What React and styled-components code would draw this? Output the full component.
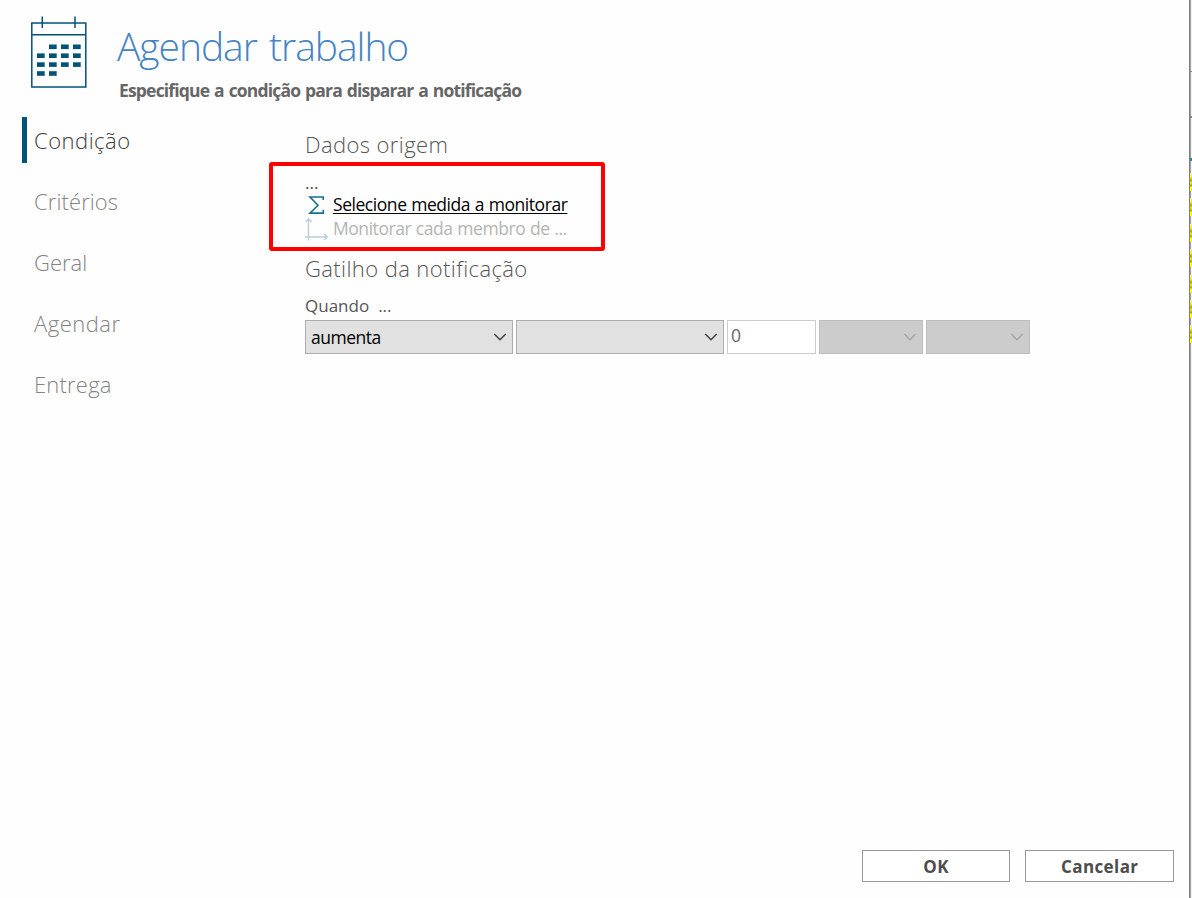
import styled, { createGlobalStyle } from "styled-components";

const GlobalStyle = createGlobalStyle`
  * {
    box-sizing: border-box;
  }

  body {
    margin: 0;
    background: #fefefe;
    font-family: "Open Sans", "Noto Sans", sans-serif;
  }
`;

const Screen = styled.div`
  display: flex;
  width: 100%;
  height: 898px;
  overflow: hidden;
`;

const Dialog = styled.main`
  flex: 1;
  display: flex;
  flex-direction: column;
  border-right: 1px solid #808080;
`;

/* strip of the window behind the dialog */
const Behind = styled.div`
  flex: none;
  width: 2px;
  background: #f4f4f4;
  border-left: 1px solid #a0a0a0;
`;

const BehindMark = styled.div`
  width: 2px;
  height: ${(props) => props.$height};
  margin-left: -1px;
  margin-top: ${(props) => props.$gap};
  background: ${(props) => props.$color};
`;

const Header = styled.header`
  display: flex;
  height: 117px;
  padding: 15px 0 0 30px;
`;

const Heading = styled.div`
  padding: 6px 0 0 30px;
`;

const Title = styled.h1`
  margin: 0;
  font-size: 39px;
  font-weight: 300;
  line-height: 50px;
  letter-spacing: -1.05px;
  word-spacing: 3.2px;
  color: #4684c4;
`;

const Subtitle = styled.p`
  margin: 7px 0 0 2px;
  font-size: 17.5px;
  font-weight: 700;
  line-height: 24px;
  letter-spacing: -0.82px;
  word-spacing: 1.1px;
  color: #666;
`;

const Body = styled.div`
  flex: 1;
  display: flex;
`;

const Nav = styled.nav`
  display: flex;
  flex-direction: column;
  gap: 15px;
  width: 269px;
  padding-left: 22px;
`;

const NavItem = styled.a`
  height: 46px;
  padding-left: 7px;
  border-left: 5px solid ${(props) => (props.$active ? "#005377" : "transparent")};
  font-size: 22px;
  font-weight: 300;
  line-height: 46px;
  letter-spacing: ${(props) => props.$spacing};
  color: ${(props) => (props.$active ? "#3c3c3c" : "#848484")};
`;

const Content = styled.section`
  display: flex;
  flex-direction: column;
  align-items: flex-start;
`;

const SectionTitle = styled.h2`
  margin: 0 0 0 36px;
  padding-top: ${(props) => props.$top};
  font-size: 22px;
  font-weight: 300;
  line-height: 30px;
  letter-spacing: 0.4px;
  color: #555;
`;

const Highlight = styled.div`
  width: 336px;
  height: 89px;
  margin-top: 3px;
  padding: 8px 0 0 32px;
  border: 4px solid #fe0000;
  border-radius: 3px;
`;

const Dots = styled.div`
  height: 19px;
  font-size: 17px;
  line-height: 17px;
  color: #444;
`;

const SourceRow = styled.div`
  display: flex;
  height: 24px;
  font-size: 17.5px;
  line-height: 23px;
  letter-spacing: -0.45px;
  word-spacing: 0.6px;
  color: ${(props) => (props.$disabled ? "#b4b4b4" : "#000")};

  svg {
    flex: none;
    margin-right: 5px;
  }
`;

const SourceLink = styled.span`
  text-decoration: ${(props) => (props.$underline ? "underline" : "none")};
  text-decoration-thickness: 1.4px;
  text-underline-offset: 2px;
  text-decoration-skip-ink: none;
  white-space: nowrap;
`;

const When = styled.div`
  display: flex;
  gap: 9px;
  margin: 11px 0 0 36px;
  font-size: 17px;
  line-height: 24px;
  color: #555;
`;

const Fields = styled.div`
  display: flex;
  gap: 3.4px;
  margin: 2px 0 0 36px;
`;

const Select = styled.div`
  display: flex;
  align-items: center;
  justify-content: space-between;
  width: ${(props) => props.$width};
  height: 34px;
  padding: 0 5px;
  border: 1.4px solid ${(props) => (props.$disabled ? "#bdbdbd" : "#adadad")};
  background: ${(props) => (props.$disabled ? "#cccccc" : "#e1e1e1")};
  color: ${(props) => (props.$disabled ? "#a6a6a6" : "#000")};
  font-size: 17.5px;
  line-height: 30px;
  letter-spacing: -0.5px;

  svg {
    color: ${(props) => (props.$disabled ? "#a8a8a8" : "#444")};
  }
`;

const NumberField = styled.div`
  width: 88.6px;
  height: 34px;
  padding-left: 3px;
  border: 1.4px solid #ccc;
  background: #fff;
  font-size: 17.5px;
  line-height: 29px;
  color: #666;
`;

const Footer = styled.footer`
  display: flex;
  justify-content: flex-end;
  gap: 15px;
  padding: 0 15px 16px 0;
`;

const Button = styled.button`
  width: 148.6px;
  height: 32px;
  padding: 0;
  border: 1.4px solid #999;
  background: #fff;
  font-family: inherit;
  font-size: 17px;
  font-weight: 700;
  letter-spacing: 0.4px;
  color: #4d4d4d;
`;

const DAYS = [
  [1, 0], [2, 0], [3, 0],
  [0, 1], [1, 1], [2, 1], [3, 1],
  [0, 2], [1, 2], [2, 2], [3, 2],
  [0, 3], [1, 3],
];

function CalendarIcon() {
  return (
    <svg width="57" height="75" viewBox="30 15 57 75" fill="none" stroke="#005377" strokeWidth="1.5">
      <rect x="31.8" y="23" width="54" height="64" />
      <path d="M31.8 34.7H85.8M42.3 16.5V28M75 16.5V28" />
      {DAYS.map(([col, row]) => (
        <rect key={`${col}-${row}`} x={37 + col * 12} y={44.5 + row * 8.9} width="7.7" height="4.6" fill="#005377" stroke="none" />
      ))}
    </svg>
  );
}

function SigmaIcon() {
  return (
    <svg width="23" height="24" viewBox="305 193 23 24" fill="none" stroke="#16718f" strokeWidth="1.6">
      <path d="M323.2 200V197H310L318 205.2L310 213.1H323.3V209.8" />
    </svg>
  );
}

function AxisIcon() {
  return (
    <svg width="23" height="24" viewBox="305 217 23 24" fill="none" stroke="#b5d0dc" strokeWidth="1.4">
      <path d="M308.5 240.5V219M305.4 222L308.5 218.7L311.6 222M305 237H327M324.2 234L327.3 237L324.2 240" />
    </svg>
  );
}

function Chevron() {
  return (
    <svg width="14" height="10" viewBox="0 0 14 10" fill="none" stroke="currentColor" strokeWidth="1.6">
      <path d="M1.3 2L7 7.7L12.7 2" />
    </svg>
  );
}

const NAV = [
  { label: "Condição", spacing: "0.5px" },
  { label: "Critérios", spacing: "0.1px" },
  { label: "Geral", spacing: "0" },
  { label: "Agendar", spacing: "0.5px" },
  { label: "Entrega", spacing: "0.2px" },
];

const MARKS = [
  { gap: "71px", height: "1px", color: "#888" },
  { gap: "44px", height: "2px", color: "#888" },
  { gap: "40px", height: "3px", color: "#2a8a9c" },
];

export default function App() {
  return (
    <>
      <GlobalStyle />
      <Screen>
        <Dialog>
          <Header>
            <CalendarIcon />
            <Heading>
              <Title>Agendar trabalho</Title>
              <Subtitle>Especifique a condição para disparar a notificação</Subtitle>
            </Heading>
          </Header>

          <Body>
            <Nav>
              {NAV.map((item, i) => (
                <NavItem key={item.label} $active={i === 0} $spacing={item.spacing}>{item.label}</NavItem>
              ))}
            </Nav>

            <Content>
              <SectionTitle $top="12px">Dados origem</SectionTitle>
              <Highlight>
                <Dots>...</Dots>
                <SourceRow>
                  <SigmaIcon />
                  <SourceLink $underline>Selecione medida a monitorar</SourceLink>
                </SourceRow>
                <SourceRow $disabled>
                  <AxisIcon />
                  <SourceLink>Monitorar cada membro de ...</SourceLink>
                </SourceRow>
              </Highlight>

              <SectionTitle $top="2px">Gatilho da notificação</SectionTitle>
              <When>
                <span>Quando</span>
                <span>...</span>
              </When>
              <Fields>
                <Select $width="207.6px">aumenta <Chevron /></Select>
                <Select $width="207.6px"><span /><Chevron /></Select>
                <NumberField>0</NumberField>
                <Select $width="103.8px" $disabled><span /><Chevron /></Select>
                <Select $width="103.8px" $disabled><span /><Chevron /></Select>
              </Fields>
            </Content>
          </Body>

          <Footer>
            <Button>OK</Button>
            <Button>Cancelar</Button>
          </Footer>
        </Dialog>
        <Behind>
          {MARKS.map((mark) => (
            <BehindMark key={mark.gap} $gap={mark.gap} $height={mark.height} $color={mark.color} />
          ))}
          {[0, 1, 2, 3, 4, 5, 6].map((n) => (
            <BehindMark
              key={n}
              $gap={n === 0 ? "12px" : "7.4px"}
              $height="18px"
              $color="linear-gradient(#f6f6a0, #e9e930 25%, #a9a900 40%, #e9e930 55%, #a9a900 70%, #ffff00 80%)"
            />
          ))}
        </Behind>
      </Screen>
    </>
  );
}
